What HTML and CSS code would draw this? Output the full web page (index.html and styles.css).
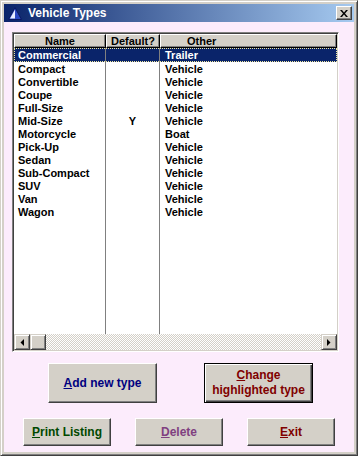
FILE: index.html
```html
<!DOCTYPE html>
<html lang="en">
<head>
  <meta charset="UTF-8" />
  <title>Vehicle Types</title>
  <link rel="stylesheet" href="styles.css">
</head>
<body>
  <div class="window">
    <!-- Title bar -->
    <div class="titlebar">
      <svg class="app-icon" width="14" height="13" viewBox="0 0 14 13">
        <polygon points="7,0.5 13.5,12.5 0.5,12.5" fill="#2a48c0" stroke="#0a1a60" stroke-width="1" />
        <polygon points="7,2.5 7,11.5 2,11.5" fill="#e8eeff" />
      </svg>
      <span class="title">Vehicle Types</span>
      <div class="close-btn">
        <svg width="8" height="7" viewBox="0 0 8 7">
          <path d="M0 0h2l2 2.5 2-2.5h2l-3 3.5 3 3.5h-2l-2-2.5-2 2.5h-2l3-3.5z" fill="#000" />
        </svg>
      </div>
    </div>

    <div class="client">
      <!-- List of vehicle types -->
      <div class="listbox">
        <div class="list-head">
          <div class="hcell col-name">Name</div>
          <div class="hcell col-default">Default?</div>
          <div class="hcell col-other head-other">Other</div>
        </div>
        <div class="list-body" id="listBody"></div>
        <div class="hscroll">
          <div class="sb-btn">
            <svg width="4" height="7" viewBox="0 0 4 7"><polygon points="4,0 4,7 0.5,3.5" fill="#000" /></svg>
          </div>
          <div class="sb-thumb"></div>
          <div class="sb-track"></div>
          <div class="sb-btn">
            <svg width="4" height="7" viewBox="0 0 4 7"><polygon points="0,0 0,7 3.5,3.5" fill="#000" /></svg>
          </div>
        </div>
      </div>

      <div class="btn-row top-row">
        <button class="btn btn-big blue"><u>A</u>dd new type</button>
        <button class="btn btn-big red default-btn"><u>C</u>hange<br>highlighted type</button>
      </div>
      <div class="btn-row bottom-row">
        <button class="btn btn-small green"><u>P</u>rint Listing</button>
        <button class="btn btn-small purple"><u>D</u>elete</button>
        <button class="btn btn-small red"><u>E</u>xit</button>
      </div>
    </div>
  </div>

  <script>
    // Vehicle type rows
    const types = [
      ['Commercial', '', 'Trailer'],
      ['Compact', '', 'Vehicle'],
      ['Convertible', '', 'Vehicle'],
      ['Coupe', '', 'Vehicle'],
      ['Full-Size', '', 'Vehicle'],
      ['Mid-Size', 'Y', 'Vehicle'],
      ['Motorcycle', '', 'Boat'],
      ['Pick-Up', '', 'Vehicle'],
      ['Sedan', '', 'Vehicle'],
      ['Sub-Compact', '', 'Vehicle'],
      ['SUV', '', 'Vehicle'],
      ['Van', '', 'Vehicle'],
      ['Wagon', '', 'Vehicle']
    ];

    const body = document.getElementById('listBody');
    types.forEach((t, i) => {
      const row = document.createElement('div');
      row.className = 'row' + (i === 0 ? ' selected' : '');
      row.innerHTML =
        '<div class="cell col-name">' + t[0] + '</div>' +
        '<div class="cell col-default">' + t[1] + '</div>' +
        '<div class="cell col-other">' + t[2] + '</div>';
      body.appendChild(row);
    });

    // Filler keeps the column lines running to the bottom
    const filler = document.createElement('div');
    filler.className = 'row filler';
    filler.innerHTML = '<div class="cell col-name"></div><div class="cell col-default"></div><div class="cell col-other"></div>';
    body.appendChild(filler);
  </script>
</body>
</html>
```

FILE: styles.css
```css
/* GLOBAL */
body {
  margin: 0;
  padding: 0;
  font-family: 'Liberation Sans', Arial, sans-serif;
  background: #d4d0c8;
}

/* WINDOW FRAME */
.window {
  width: 358px;
  height: 456px;
  box-sizing: border-box;
  background: #d4d0c8;
  border: 1px solid;
  border-color: #d4d0c8 #404040 #404040 #d4d0c8;
  box-shadow: inset 1px 1px 0 #fff, inset -1px -1px 0 #808080;
  padding: 3px;
  display: flex;
  flex-direction: column;
}

/* TITLE BAR */
.titlebar {
  height: 18px;
  background: linear-gradient(to right, #0a246a, #a6caf0);
  display: flex;
  align-items: center;
  padding-left: 4px;
  padding-right: 2px;
}
.app-icon {
  flex-shrink: 0;
  margin-top: 1px;
}
.title {
  color: #fff;
  font-weight: bold;
  font-size: 12px;
  margin-left: 6px;
  flex: 1;
}
.close-btn {
  width: 16px;
  height: 14px;
  box-sizing: border-box;
  background: #d4d0c8;
  border: 1px solid;
  border-color: #fff #404040 #404040 #fff;
  box-shadow: inset -1px -1px 0 #808080;
  display: flex;
  align-items: center;
  justify-content: center;
}

/* CLIENT AREA */
.client {
  flex: 1;
  background: #fcecfc;
  padding: 10px 15px 6px 8px;
  display: flex;
  flex-direction: column;
}

/* LIST BOX */
.listbox {
  height: 320px;
  box-sizing: border-box;
  border: 1px solid;
  border-color: #808080 #fff #fff #808080;
  box-shadow: inset 1px 1px 0 #404040, inset -1px -1px 0 #d4d0c8;
  padding: 1px;
  background: #fff;
  display: flex;
  flex-direction: column;
}
.list-head {
  display: flex;
  height: 14px;
}
.hcell {
  box-sizing: border-box;
  background: #d4d0c8;
  border: 1px solid;
  border-color: #fff #000 #000 #fff;
  box-shadow: inset -1px -1px 0 #808080;
  font-size: 11px;
  font-weight: bold;
  line-height: 12px;
  text-align: center;
  color: #000;
}
.hcell.head-other {
  text-align: left;
  padding-left: 26px;
}
.col-name { width: 92px; }
.col-default { width: 54px; }
.col-other { flex: 1; }

.list-body {
  flex: 1;
  display: flex;
  flex-direction: column;
  overflow: hidden;
}
.row {
  display: flex;
  height: 13px;
  flex-shrink: 0;
}
.row.selected {
  height: 14px;
}
.row.filler {
  flex: 1;
}
.cell {
  box-sizing: border-box;
  font-size: 11px;
  font-weight: bold;
  line-height: 13px;
  padding-top: 1px;
  color: #000;
  white-space: nowrap;
}
.cell.col-name {
  padding-left: 4px;
  border-right: 1px solid #808080;
}
.cell.col-default {
  text-align: center;
  border-right: 1px solid #808080;
}
.cell.col-other {
  padding-left: 5px;
}
.row.selected {
  background: #0a246a;
  outline: 1px dotted #f0e8a0;
  outline-offset: -1px;
}
.row.selected .cell {
  color: #fff;
}

/* HORIZONTAL SCROLLBAR */
.hscroll {
  display: flex;
  height: 16px;
}
.sb-btn, .sb-thumb {
  width: 16px;
  height: 16px;
  box-sizing: border-box;
  background: #d4d0c8;
  border: 1px solid;
  border-color: #d4d0c8 #404040 #404040 #d4d0c8;
  box-shadow: inset 1px 1px 0 #fff, inset -1px -1px 0 #808080;
  display: flex;
  align-items: center;
  justify-content: center;
}
.sb-track {
  flex: 1;
  background: repeating-conic-gradient(#d4d0c8 0 25%, #fff 0 50%) 0 0 / 2px 2px;
}

/* BUTTONS */
.btn-row {
  display: flex;
}
.top-row {
  margin-top: 11px;
  padding-left: 36px;
  gap: 47px;
}
.bottom-row {
  margin-top: 15px;
  padding-left: 11px;
  gap: 24px;
}
.btn {
  box-sizing: border-box;
  background: #d4d0c8;
  border: 1px solid;
  border-color: #fff #404040 #404040 #fff;
  box-shadow: inset -1px -1px 0 #808080;
  font-family: 'Liberation Sans', Arial, sans-serif;
  font-size: 12px;
  font-weight: bold;
  line-height: 15px;
  padding: 0;
  text-align: center;
}
.btn-big {
  width: 109px;
  height: 40px;
}
.btn-small {
  width: 88px;
  height: 28px;
}
.default-btn {
  border: 1px solid #000;
  box-shadow: inset 1px 1px 0 #fff, inset -1px -1px 0 #404040, inset -2px -2px 0 #808080;
}
.blue { color: #000080; }
.red { color: #800000; }
.green { color: #004800; }
.purple { color: #804080; }
```
